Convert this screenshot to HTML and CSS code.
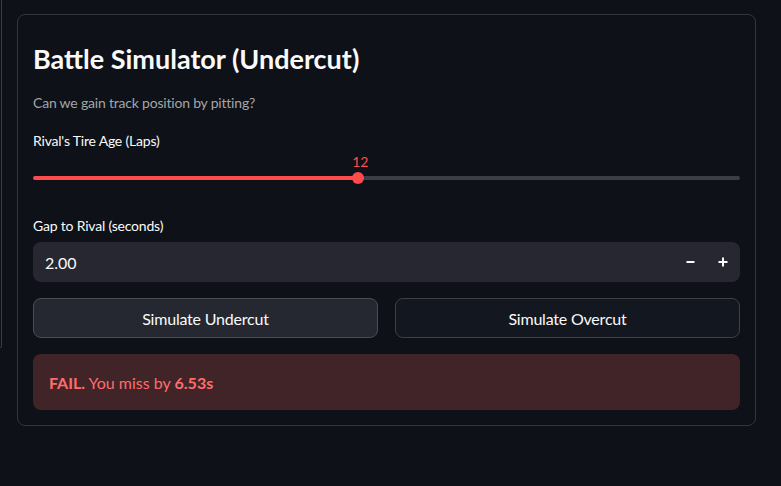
FILE: index.html
```html
<!DOCTYPE html>
<html lang="en">
<head>
<meta charset="utf-8">
<title>Battle Simulator</title>
<link rel="stylesheet" href="styles.css">
</head>
<body>
<div class="page">
  <div class="ghost"></div>
  <section class="card">
    <h3 class="title">Battle Simulator (Undercut)</h3>
    <p class="subtitle">Can we gain track position by pitting?</p>

    <div class="field slider-field">
      <label class="label">Rival's Tire Age (Laps)</label>
      <div class="slider">
        <div class="slider-value-row">
          <span class="slider-value" style="left: 46%">12</span>
        </div>
        <div class="track">
          <div class="fill" style="width: 46%"></div>
          <div class="thumb"></div>
          <div class="rest"></div>
        </div>
      </div>
    </div>

    <div class="field number-field">
      <label class="label">Gap to Rival (seconds)</label>
      <div class="number-input">
        <span class="number-value">2.00</span>
        <div class="steppers">
          <span class="step">
            <svg width="10" height="10" viewBox="0 0 10 10"><rect x="0.5" y="4" width="8" height="2" fill="#fafafa"/></svg>
          </span>
          <span class="step">
            <svg width="10" height="10" viewBox="0 0 10 10"><rect x="0.5" y="4" width="9" height="2" fill="#fafafa"/><rect x="4" y="0.5" width="2" height="9" fill="#fafafa"/></svg>
          </span>
        </div>
      </div>
    </div>

    <div class="buttons">
      <button class="btn btn-active">Simulate Undercut</button>
      <button class="btn">Simulate Overcut</button>
    </div>

    <div class="alert">
      <strong>FAIL.</strong> You miss by <strong>6.53s</strong>
    </div>
  </section>
</div>
</body>
</html>
```

FILE: styles.css
```css
* { box-sizing: border-box; }

html, body {
  margin: 0;
  padding: 0;
  background: #0e1117;
  color: #fafafa;
  font-family: "Lato", "Noto Sans", sans-serif;
  height: 100%;
  overflow: hidden;
}

.page {
  display: flex;
  align-items: flex-start;
  padding-top: 14px;
}

.ghost {
  width: 2px;
  height: 348px;
  margin-top: -14px;
  border-right: 1px solid #3a3d45;
  border-bottom: 1px solid #3a3d45;
  border-bottom-right-radius: 6px;
  margin-right: 15px;
  flex: none;
}

.card {
  width: 739px;
  border: 1px solid #33363e;
  border-radius: 8px;
  padding: 22px 15px 15px 15px;
  display: flex;
  flex-direction: column;
}

.title {
  margin: 0;
  font-size: 27px;
  font-weight: 700;
  line-height: 44px;
  height: 44px;
}

.subtitle {
  margin: 12px 0 0 0;
  font-size: 14px;
  line-height: 20px;
  color: #a3a5aa;
  letter-spacing: -0.2px;
}

.field { display: flex; flex-direction: column; }

.label {
  font-size: 14px;
  line-height: 20px;
  color: #fafafa;
  letter-spacing: -0.2px;
}

.slider-field { margin-top: 18px; }

.slider { display: flex; flex-direction: column; }

.slider-value-row {
  position: relative;
  height: 21px;
}

.slider-value {
  position: absolute;
  top: 3px;
  transform: translateX(-6px);
  color: #ff4b4b;
  font-size: 14px;
  line-height: 16px;
}

.track {
  display: flex;
  align-items: center;
  height: 12px;
}

.fill {
  height: 4px;
  background: #ff4b4b;
  border-radius: 2px 0 0 2px;
  flex: none;
}

.thumb {
  width: 12px;
  height: 12px;
  border-radius: 50%;
  background: #ff4b4b;
  margin-left: -6px;
  margin-right: -6px;
  position: relative;
  z-index: 1;
  flex: none;
}

.rest {
  flex: 1;
  height: 4px;
  background: #3a3e47;
  border-radius: 0 2px 2px 0;
}

.number-field { margin-top: 32px; }

.number-field .label { margin-bottom: 6px; }

.number-input {
  height: 40px;
  background: #262730;
  border-radius: 8px;
  display: flex;
  align-items: center;
  justify-content: space-between;
  padding: 0 1px 0 12px;
}

.number-value {
  font-size: 16px;
  color: #fafafa;
}

.steppers { display: flex; }

.step {
  width: 32px;
  height: 32px;
  display: flex;
  align-items: center;
  justify-content: center;
}

.buttons {
  margin-top: 16px;
  display: grid;
  grid-template-columns: 1fr 1fr;
  gap: 17px;
}

.btn {
  height: 40px;
  border: 1px solid #3d4048;
  border-radius: 8px;
  background: #131720;
  color: #fafafa;
  font-family: inherit;
  font-size: 16px;
  letter-spacing: -0.2px;
}

.btn-active { background: #252830; border-color: #4a4d55; }

.alert {
  margin-top: 16px;
  height: 56px;
  background: #412428;
  border-radius: 8px;
  color: #ff6c6c;
  font-size: 16px;
  display: flex;
  align-items: center;
  padding: 0 16px;
  white-space: pre;
}

.alert strong { font-weight: 700; }
```
